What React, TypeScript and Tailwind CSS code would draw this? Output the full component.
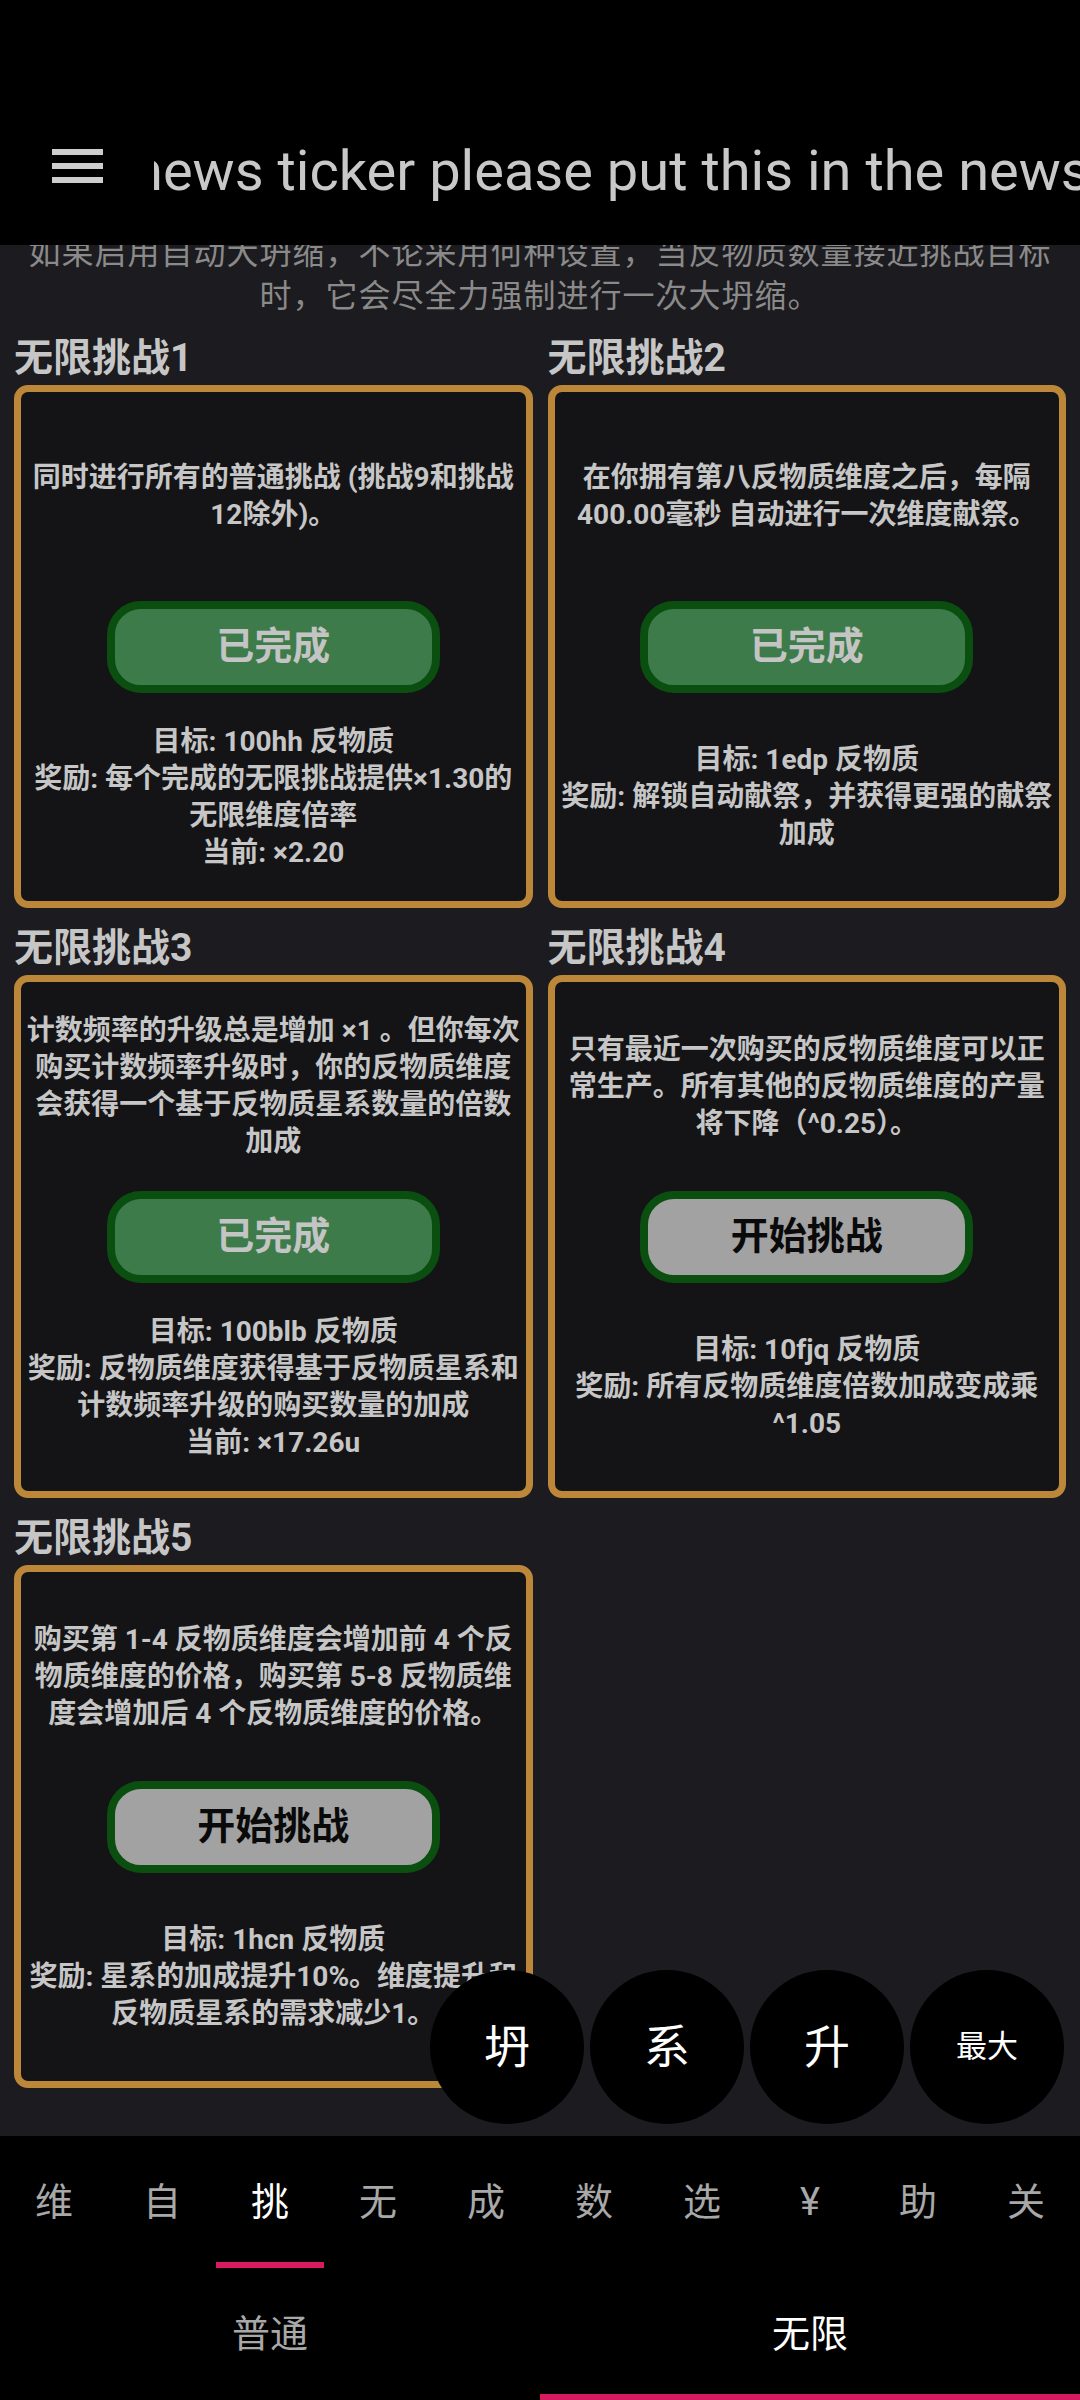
import React from "react";

const FONT = "font-['Roboto','Noto_Sans_CJK_SC',sans-serif]";

type CardProps = {
  title: string;
  desc: React.ReactNode;
  done: boolean;
  goals: string[];
};

function ChallengeButton({ done }: { done: boolean }) {
  if (done) {
    return (
      <div className="w-[333px] h-[92px] border-[8px] border-[#0a4f10] rounded-[34px] bg-[#3e7b4a] flex items-center justify-center text-[38px] font-bold text-[#c4c4c4]">
        已完成
      </div>
    );
  }
  return (
    <div className="w-[333px] h-[92px] border-[8px] border-[#0a4f10] rounded-[34px] bg-[#a2a2a2] flex items-center justify-center text-[38px] font-bold text-[#0a0a0a]">
      开始挑战
    </div>
  );
}

function Card({ title, desc, done, goals }: CardProps) {
  return (
    <div className="flex flex-col">
      <div className="h-[67px] pt-[18px] text-[39px] leading-[44px] font-bold text-[#c6c6c6] whitespace-nowrap">
        {title}
      </div>
      <div className="h-[523px] border-[7px] border-[#bd873a] rounded-[14px] bg-[#141416] flex flex-col px-[5px]">
        <div className="flex-1 flex items-center justify-center text-center text-[28px] leading-[37px] font-bold text-[#c6c6c6]">
          <div>{desc}</div>
        </div>
        <div className="flex justify-center">
          <ChallengeButton done={done} />
        </div>
        <div className="flex-1 flex items-center justify-center text-center text-[28px] leading-[37px] font-bold text-[#c6c6c6]">
          <div>
            {goals.map((g, i) => (
              <div key={i}>{g}</div>
            ))}
          </div>
        </div>
      </div>
    </div>
  );
}

const cards: CardProps[] = [
  {
    title: "无限挑战1",
    desc: "同时进行所有的普通挑战 (挑战9和挑战12除外)。",
    done: true,
    goals: ["目标: 100hh 反物质", "奖励: 每个完成的无限挑战提供×1.30的无限维度倍率", "当前: ×2.20"],
  },
  {
    title: "无限挑战2",
    desc: "在你拥有第八反物质维度之后，每隔400.00毫秒 自动进行一次维度献祭。",
    done: true,
    goals: ["目标: 1edp 反物质", "奖励: 解锁自动献祭，并获得更强的献祭加成"],
  },
  {
    title: "无限挑战3",
    desc: "计数频率的升级总是增加 ×1 。但你每次购买计数频率升级时，你的反物质维度会获得一个基于反物质星系数量的倍数加成",
    done: true,
    goals: ["目标: 100blb 反物质", "奖励: 反物质维度获得基于反物质星系和计数频率升级的购买数量的加成", "当前: ×17.26u"],
  },
  {
    title: "无限挑战4",
    desc: "只有最近一次购买的反物质维度可以正常生产。所有其他的反物质维度的产量将下降（^0.25）。",
    done: false,
    goals: ["目标: 10fjq 反物质", "奖励: 所有反物质维度倍数加成变成乘^1.05"],
  },
  {
    title: "无限挑战5",
    desc: "购买第 1-4 反物质维度会增加前 4 个反物质维度的价格，购买第 5-8 反物质维度会增加后 4 个反物质维度的价格。",
    done: false,
    goals: ["目标: 1hcn 反物质", "奖励: 星系的加成提升10%。维度提升和反物质星系的需求减少1。"],
  },
];

const tabs = ["维", "自", "挑", "无", "成", "数", "选", "¥", "助", "关"];

export default function App() {
  return (
    <div className={`${FONT} relative w-[1080px] h-[2400px] overflow-hidden bg-[#1c1b1f] flex flex-col`}>
      {/* Header */}
      <div className="h-[245px] shrink-0 bg-black flex items-start pt-[136px] relative z-10">
        <div className="ml-[52px] mt-[13px] w-[51px] flex flex-col gap-[8px]">
          <div className="h-[6px] bg-[#cdcdcd]" />
          <div className="h-[6px] bg-[#cdcdcd]" />
          <div className="h-[6px] bg-[#cdcdcd]" />
        </div>
        <div className="ml-[51px] flex-1 overflow-hidden">
          <div className="-ml-[22px] whitespace-nowrap text-[56px] leading-[70px] text-[#c8c8c8]">
            news ticker please put this in the news ticker
          </div>
        </div>
      </div>

      {/* Content */}
      <div className="flex-1 overflow-hidden px-[14px]">
        <div className="-mt-[13px] text-center text-[32px] leading-[43px] tracking-[1px] text-[#8a8a8a]">
          如果启用自动大坍缩，不论采用何种设置，当反物质数量接近挑战目标时，它会尽全力强制进行一次大坍缩。
        </div>
        <div className="grid grid-cols-2 gap-x-[15px]">
          {cards.map((c) => (
            <Card key={c.title} {...c} />
          ))}
        </div>
      </div>

      {/* Floating buttons */}
      <div className="absolute right-[16px] top-[1970px] flex gap-[6px] z-20">
        {["坍", "系", "升"].map((t) => (
          <div key={t} className="w-[154px] h-[154px] rounded-full bg-black flex items-center justify-center text-white text-[46px]">
            {t}
          </div>
        ))}
        <div className="w-[154px] h-[154px] rounded-full bg-black flex items-center justify-center text-white text-[31px]">
          最大
        </div>
      </div>

      {/* Bottom nav */}
      <div className="h-[264px] shrink-0 bg-black flex flex-col">
        <div className="h-[132px] flex">
          {tabs.map((t, i) => (
            <div key={t} className="w-[108px] h-full relative flex items-center justify-center">
              <span className={`text-[38px] ${i === 2 ? "text-white" : "text-[#a8a8a8]"}`}>{t}</span>
              {i === 2 && <div className="absolute left-0 right-0 bottom-0 h-[6px] bg-[#d81b60]" />}
            </div>
          ))}
        </div>
        <div className="h-[132px] flex">
          <div className="w-[540px] h-full flex items-center justify-center text-[38px] text-[#a8a8a8]">普通</div>
          <div className="w-[540px] h-full relative flex items-center justify-center text-[38px] text-white">
            无限
            <div className="absolute left-0 right-0 bottom-0 h-[6px] bg-[#d81b60]" />
          </div>
        </div>
      </div>
    </div>
  );
}
